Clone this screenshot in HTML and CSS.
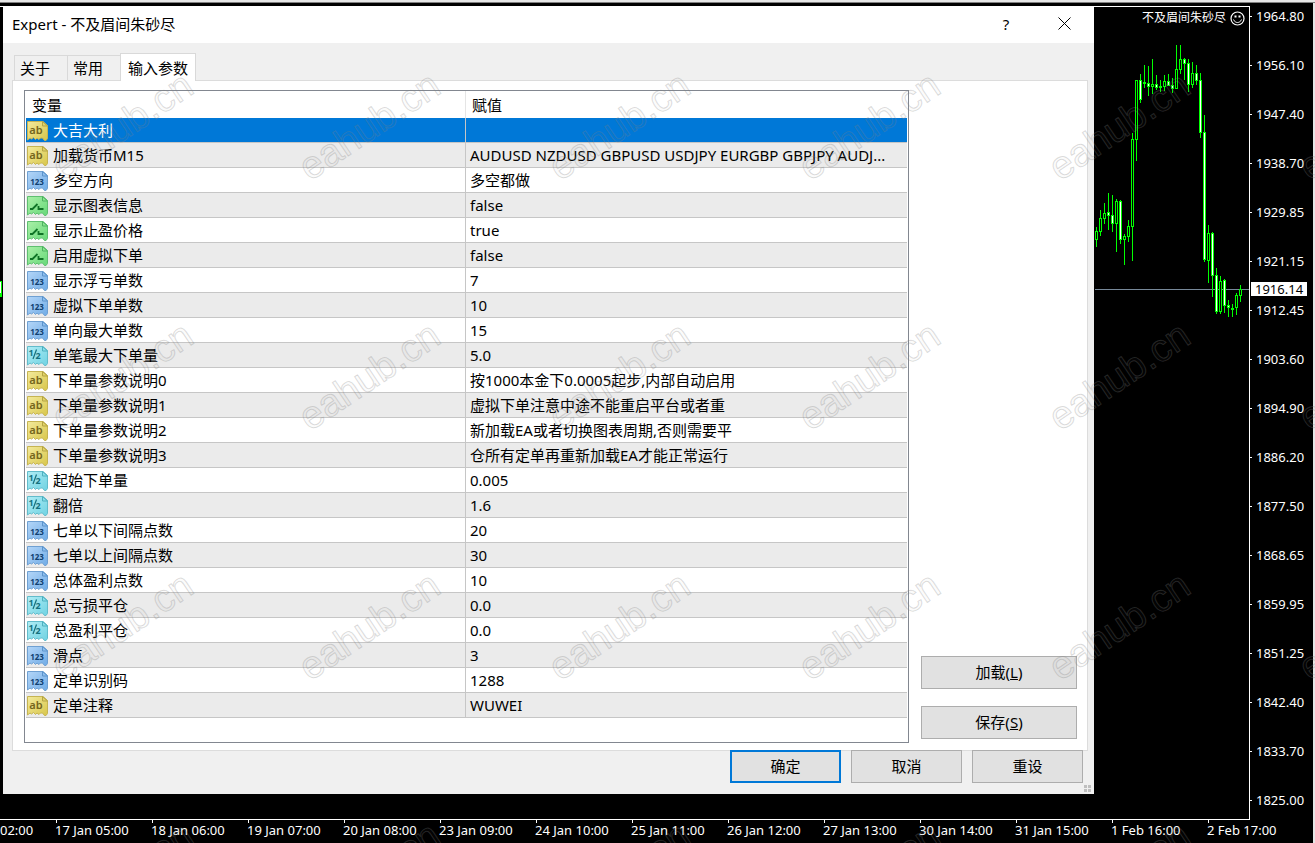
FILE: index.html
```html
<!DOCTYPE html>
<html lang="zh-CN">
  <head>
    <meta charset="utf-8">
    <title>Expert - 不及眉间朱砂尽</title>
    <link rel="stylesheet" href="styles.css">
  </head>

  <body>
    <!-- icons for the parameter types -->
    <svg class="defs" width="0" height="0" aria-hidden="true">
      <defs>
        <linearGradient id="g-yellow" x1="0" y1="0" x2="1" y2="1">
          <stop offset="0" stop-color="#f3ea9c"/><stop offset="1" stop-color="#d8c64a"/>
        </linearGradient>
        <linearGradient id="g-blue" x1="0" y1="0" x2="1" y2="1">
          <stop offset="0" stop-color="#b4d6f8"/><stop offset="1" stop-color="#6fabe6"/>
        </linearGradient>
        <linearGradient id="g-green" x1="0" y1="0" x2="1" y2="1">
          <stop offset="0" stop-color="#aaf0a8"/><stop offset="1" stop-color="#66d878"/>
        </linearGradient>
        <linearGradient id="g-cyan" x1="0" y1="0" x2="1" y2="1">
          <stop offset="0" stop-color="#b0edf5"/><stop offset="1" stop-color="#6fd2e2"/>
        </linearGradient>
        <path id="paper" d="M.5 1.500H16L20.500 5.500V18.500L19 20.500L17.500 20.500L15.500 18L13.500 18L12 19.500L10 18L8.500 19.500L6.500 17.500L4.500 19L3 18L.5 20Z"/>
      </defs>
      <symbol id="i-ab" viewBox="0 0 21 21">
        <use href="#paper" fill="url(#g-yellow)" stroke="#c6b452"/>
        <path d="M15.500 1.500V6H20.500Z" fill="#e2d468" stroke="#b5a445"/>
        <text x="9" y="14" class="glyph ab">ab</text>
      </symbol>
      <symbol id="i-int" viewBox="0 0 21 21">
        <use href="#paper" fill="url(#g-blue)" stroke="#6fa0d2"/>
        <path d="M15.500 1.500V6H20.500Z" fill="#8fc0f0" stroke="#5c94cc"/>
        <text x="10" y="15" class="glyph int">123</text>
      </symbol>
      <symbol id="i-bool" viewBox="0 0 21 21">
        <use href="#paper" fill="url(#g-green)" stroke="#5fbf70"/>
        <path d="M15.500 1.500V6H20.500Z" fill="#8ae890" stroke="#4fb262"/>
        <path d="M3 14H5.500L10.500 9M11.500 11V14H16.500" fill="none" stroke="#0f7326" stroke-width="1.800"/>
      </symbol>
      <symbol id="i-dbl" viewBox="0 0 21 21">
        <use href="#paper" fill="url(#g-cyan)" stroke="#62bccb"/>
        <path d="M15.500 1.500V6H20.500Z" fill="#8be0ec" stroke="#4fb0c0"/>
        <text x="4" y="11" class="glyph dbl">1</text>
        <path d="M6 14L9.500 4.500" stroke="#14707f" stroke-width="1.200"/>
        <text x="11" y="14" class="glyph dbl">2</text>
      </symbol>
    </svg>

    <div class="top-edge"></div>

    <main class="chart">
      <div class="plot">
        <span class="edge-candle"></span>
        <div class="expert-name">不及眉间朱砂尽
          <svg width="15" height="15" viewBox="0 0 15 15" fill="none" stroke="#fff">
            <circle cx="7.500" cy="7.500" r="6.500" stroke-width="1.200"/>
            <path d="M3.500 8.500C5 12.500 10 12.500 11.500 8.500"/>
            <path d="M4.500 5.500H6.500M8.500 5.500H10.500" stroke-width="2"/>
          </svg>
        </div>
        <svg id="candles" width="154" height="320" viewBox="1095 7 154 320" shape-rendering="crispEdges">
          <rect x="1095" y="289" width="154" height="1" fill="#778899"/>
        </svg>
      </div>

      <div class="prices">
        <span>1964.80</span>
        <span>1956.10</span>
        <span>1947.40</span>
        <span>1938.70</span>
        <span>1929.85</span>
        <span>1921.15</span>
        <span>1912.45</span>
        <span>1903.60</span>
        <span>1894.90</span>
        <span>1886.20</span>
        <span>1877.50</span>
        <span>1868.65</span>
        <span>1859.95</span>
        <span>1851.25</span>
        <span>1842.40</span>
        <span>1833.70</span>
        <span>1825.00</span>
        <b class="bid">1916.14</b>
      </div>

      <div class="times">
        <span class="cut">02:00</span>
        <span>17 Jan 05:00</span>
        <span>18 Jan 06:00</span>
        <span>19 Jan 07:00</span>
        <span>20 Jan 08:00</span>
        <span>23 Jan 09:00</span>
        <span>24 Jan 10:00</span>
        <span>25 Jan 11:00</span>
        <span>26 Jan 12:00</span>
        <span>27 Jan 13:00</span>
        <span>30 Jan 14:00</span>
        <span>31 Jan 15:00</span>
        <span>1 Feb 16:00</span>
        <span>2 Feb 17:00</span>
      </div>
    </main>

    <section class="dialog" role="dialog" aria-labelledby="dialog-title">
      <header class="titlebar">
        <h1 id="dialog-title">Expert - 不及眉间朱砂尽</h1>
        <button type="button" class="help">?</button>
        <button type="button" class="close" aria-label="关闭">
          <svg width="13" height="13" viewBox="0 0 13 13" stroke="#000"><path d="M.5 .5L12.500 12.500M12.500 .5L.5 12.500"/></svg>
        </button>
      </header>

      <nav class="tabs">
        <button type="button">关于</button>
        <button type="button">常用</button>
        <button type="button" class="active">输入参数</button>
      </nav>

      <div class="panel">
        <div class="listbox">
          <table>
            <thead>
              <tr><th>变量</th><th>赋值</th></tr>
            </thead>
            <tbody>
              <tr class="selected"><td><svg><use href="#i-ab"/></svg>大吉大利</td><td></td></tr>
              <tr><td><svg><use href="#i-ab"/></svg>加载货币M15</td><td>AUDUSD NZDUSD GBPUSD USDJPY EURGBP GBPJPY AUDJ...</td></tr>
              <tr><td><svg><use href="#i-int"/></svg>多空方向</td><td>多空都做</td></tr>
              <tr><td><svg><use href="#i-bool"/></svg>显示图表信息</td><td>false</td></tr>
              <tr><td><svg><use href="#i-bool"/></svg>显示止盈价格</td><td>true</td></tr>
              <tr><td><svg><use href="#i-bool"/></svg>启用虚拟下单</td><td>false</td></tr>
              <tr><td><svg><use href="#i-int"/></svg>显示浮亏单数</td><td>7</td></tr>
              <tr><td><svg><use href="#i-int"/></svg>虚拟下单单数</td><td>10</td></tr>
              <tr><td><svg><use href="#i-int"/></svg>单向最大单数</td><td>15</td></tr>
              <tr><td><svg><use href="#i-dbl"/></svg>单笔最大下单量</td><td>5.0</td></tr>
              <tr><td><svg><use href="#i-ab"/></svg>下单量参数说明0</td><td>按1000本金下0.0005起步,内部自动启用</td></tr>
              <tr><td><svg><use href="#i-ab"/></svg>下单量参数说明1</td><td>虚拟下单注意中途不能重启平台或者重</td></tr>
              <tr><td><svg><use href="#i-ab"/></svg>下单量参数说明2</td><td>新加载EA或者切换图表周期,否则需要平</td></tr>
              <tr><td><svg><use href="#i-ab"/></svg>下单量参数说明3</td><td>仓所有定单再重新加载EA才能正常运行</td></tr>
              <tr><td><svg><use href="#i-dbl"/></svg>起始下单量</td><td>0.005</td></tr>
              <tr><td><svg><use href="#i-dbl"/></svg>翻倍</td><td>1.6</td></tr>
              <tr><td><svg><use href="#i-int"/></svg>七单以下间隔点数</td><td>20</td></tr>
              <tr><td><svg><use href="#i-int"/></svg>七单以上间隔点数</td><td>30</td></tr>
              <tr><td><svg><use href="#i-int"/></svg>总体盈利点数</td><td>10</td></tr>
              <tr><td><svg><use href="#i-dbl"/></svg>总亏损平仓</td><td>0.0</td></tr>
              <tr><td><svg><use href="#i-dbl"/></svg>总盈利平仓</td><td>0.0</td></tr>
              <tr><td><svg><use href="#i-int"/></svg>滑点</td><td>3</td></tr>
              <tr><td><svg><use href="#i-int"/></svg>定单识别码</td><td>1288</td></tr>
              <tr><td><svg><use href="#i-ab"/></svg>定单注释</td><td>WUWEI</td></tr>
            </tbody>
          </table>
        </div>
        <div class="side">
          <button type="button" class="btn">加载(<u>L</u>)</button>
          <button type="button" class="btn">保存(<u>S</u>)</button>
        </div>
      </div>

      <footer class="actions">
        <button type="button" class="btn default">确定</button>
        <button type="button" class="btn">取消</button>
        <button type="button" class="btn">重设</button>
      </footer>
      <span class="grip"><i></i><i></i><i></i><i></i></span>
    </section>

    <div class="watermarks" id="watermarks" aria-hidden="true"></div>

    <script>
      // x, high, low, body top, body bottom, filled
      const candles = [
        [1096,227,247,231,240,0],[1100,210,236,218,232,0],[1104,203,224,213,219,0],
        [1108,193,230,212,216,1],[1112,195,232,215,224,1],[1116,199,252,201,224,0],
        [1120,200,244,201,240,1],[1124,234,265,236,240,0],[1128,220,242,226,237,0],
        [1132,133,261,139,227,0],[1136,80,161,80,140,0],[1140,74,103,80,100,1],
        [1144,65,88,82,84,0],[1148,66,96,83,87,1],[1152,59,94,84,87,0],
        [1156,75,90,84,88,1],[1160,80,92,86,88,0],[1164,75,91,81,87,0],
        [1168,74,86,81,86,1],[1172,78,93,85,89,1],[1176,45,89,69,89,0],
        [1180,45,74,59,70,0],[1184,58,80,59,64,1],[1188,59,92,63,85,1],
        [1192,62,88,73,85,0],[1196,65,85,73,81,1],[1200,73,138,80,133,1],
        [1204,115,262,132,260,1],[1208,225,283,233,261,0],[1212,232,297,233,276,1],
        [1216,268,314,275,312,1],[1220,276,314,281,312,0],[1224,279,313,280,306,1],
        [1228,300,317,305,308,1],[1232,304,317,308,310,0],[1236,293,315,295,308,0],
        [1240,285,302,289,296,0]
      ];
      const svg = document.getElementById('candles');

      function bar(x, y, w, h, color)
      {
        const r = document.createElementNS('http://www.w3.org/2000/svg', 'rect');
        r.setAttribute('x', x);
        r.setAttribute('y', y);
        r.setAttribute('width', w);
        r.setAttribute('height', Math.max(h, 0));
        r.setAttribute('fill', color);
        svg.appendChild(r);
      }

      candles.forEach(function ([x, high, low, top, bottom, filled])
      {
        bar(x, high, 1, low - high, '#00ff00');
        bar(x - 1, top, 3, bottom - top, '#00ff00');
        bar(x, top + 1, 1, bottom - top - 2, filled ? '#fff' : '#000');
      });

      const marks = document.getElementById('watermarks');
      for (let i = 0; i < 24; i++)
      {
        const mark = document.createElement('span');
        mark.textContent = 'eahub.cn';
        marks.appendChild(mark);
      }
    </script>
  </body>
</html>
```
FILE: styles.css
```css
* 
{
  box-sizing: border-box;
}

body 
{
  position: relative;
  display: flex;
  flex-direction: column;
  min-height: 100vh;
  margin: 0;
  background-color: #000;
  color: #000;
  font-family: "Noto Sans", "Noto Sans CJK SC", sans-serif;
  font-size: 15px;
}

button 
{
  padding: 0;
  font: inherit;
  color: inherit;
}

.defs 
{
  position: absolute;
}

.top-edge 
{
  height: 3px;
  background-color: #e6e6e6;
  border-bottom: 1px solid #808080;
}

/* chart */
.chart 
{
  flex: 1;
  display: grid;
  grid-template-columns: 1fr 63px;
  grid-template-rows: 1fr 23px;
  padding-top: 3px;
  border-right: 2px solid #e6e6e6;
  color: #fff;
  font-size: 13px;
}

.plot 
{
  position: relative;
  display: flex;
  justify-content: flex-end;
  border: solid #fff;
  border-width: 1px 1px 1px 0;
}

.expert-name 
{
  position: absolute;
  top: 2px;
  right: 4px;
  display: flex;
  align-items: center;
  gap: 4px;
  font-size: 12px;
  line-height: 18px;
}

.edge-candle 
{
  position: absolute;
  left: 0;
  top: 274px;
  width: 2px;
  height: 16px;
  background-color: #fff;
  border: solid #00ff00;
  border-width: 1px 1px 4px 0;
}

.prices 
{
  position: relative;
  display: flex;
  flex-direction: column;
  gap: 29px;
  line-height: 20px;
}

.prices span 
{
  display: flex;
  align-items: center;
  gap: 4px;
}

.prices span::before 
{
  content: "";
  width: 2px;
  height: 1px;
  background-color: #fff;
}

.bid 
{
  position: absolute;
  left: 1px;
  top: 276px;
  width: 56px;
  padding-left: 4px;
  background-color: #fff;
  color: #000;
  font-weight: normal;
  line-height: 14px;
}

.times 
{
  grid-column: 1 / -1;
  display: flex;
  overflow: hidden;
  line-height: 20px;
  white-space: nowrap;
}

.times span 
{
  position: relative;
  flex: none;
  width: 96px;
}

.times .cut 
{
  width: 55px;
}

.times span + span::before 
{
  content: "";
  position: absolute;
  left: 1px;
  top: 0;
  width: 1px;
  height: 3px;
  background-color: #fff;
}

/* dialog window */
.dialog 
{
  position: absolute;
  left: 3px;
  right: 221px;
  top: 6px;
  padding-bottom: 11px;
  background-color: #f0f0f0;
}

.titlebar 
{
  display: flex;
  align-items: center;
  height: 37px;
  padding: 0 1px 2px 9px;
  background-color: #fff;
}

.titlebar h1 
{
  flex: 1;
  margin: 0;
  font-size: 15px;
  font-weight: normal;
  line-height: 20px;
}

.titlebar button 
{
  display: grid;
  place-items: center;
  width: 58px;
  height: 35px;
  border: none;
  background: none;
}

.tabs 
{
  display: flex;
  align-items: flex-end;
  margin: 10px 0 0 11px;
}

.tabs button 
{
  width: 54px;
  height: 25px;
  margin-right: -1px;
  padding-left: 5px;
  border: 1px solid #d9d9d9;
  border-bottom: none;
  background-color: #f0f0f0;
  line-height: 24px;
  text-align: left;
}

.tabs .active 
{
  position: relative;
  width: 76px;
  height: 28px;
  margin-bottom: -1px;
  padding-left: 7px;
  background-color: #fff;
  line-height: 24px;
}

.panel 
{
  display: flex;
  gap: 12px;
  margin: 0 6px 0 9px;
  padding: 9px 10px 7px 11px;
  border: 1px solid #dcdcdc;
  background-color: #fff;
}

.listbox 
{
  flex: 1;
  padding: 0 1px 24px;
  border: 1px solid #828790;
}

table 
{
  width: 100%;
  table-layout: fixed;
  border-collapse: separate;
  border-spacing: 0;
  line-height: 20px;
}

th 
{
  height: 27px;
  padding: 0 6px;
  font-weight: normal;
  text-align: left;
}

th:first-child 
{
  width: 440px;
  border-right: 1px solid #e5e5e5;
}

td 
{
  height: 25px;
  padding: 0 4px;
  border-bottom: 1px solid #c6c6c6;
  white-space: nowrap;
  overflow: hidden;
}

td:first-child 
{
  padding-left: 1px;
  border-right: 1px solid #c6c6c6;
}

td svg 
{
  float: left;
  width: 21px;
  height: 21px;
  margin-right: 5px;
}

tbody tr:nth-child(even) 
{
  background-color: #ebebeb;
}

tbody .selected 
{
  background-color: #0078d7;
  color: #fff;
}

.glyph 
{
  font-family: "Noto Sans", sans-serif;
  font-weight: bold;
  text-anchor: middle;
}

.ab 
{
  font-size: 11px;
  font-weight: 600;
  fill: #75651c;
}

.int 
{
  font-size: 8px;
  fill: #103f70;
}

.dbl 
{
  font-size: 9px;
  fill: #14707f;
}

.side 
{
  display: flex;
  flex-direction: column;
  justify-content: flex-end;
  gap: 17px;
  width: 156px;
  padding-bottom: 4px;
}

.btn 
{
  height: 33px;
  padding-bottom: 2px;
  border: 1px solid #adadad;
  background-color: #e1e1e1;
  line-height: 20px;
}

.actions 
{
  position: relative;
  display: flex;
  justify-content: flex-end;
  gap: 10px;
  margin-top: -1px;
  padding-right: 11px;
}

.actions .btn 
{
  width: 111px;
}

.actions .default 
{
  border: 2px solid #0078d7;
}

.grip 
{
  position: absolute;
  right: 3px;
  bottom: 2px;
  display: grid;
  grid-template-columns: 3px 3px;
  gap: 1px;
}

.grip i 
{
  height: 3px;
  background-color: #bfbfbf;
}

/* watermark layer, one mark every 250px */
.watermarks 
{
  position: absolute;
  inset: 0;
  display: grid;
  grid-template-columns: 244px repeat(5, 250px);
  grid-auto-rows: 250px;
  place-items: center;
  padding-top: 1px;
  overflow: hidden;
  pointer-events: none;
}

.watermarks span 
{
  color: rgba(128, 128, 128, 0.05);
  font-family: "Liberation Sans", sans-serif;
  font-size: 39px;
  -webkit-text-stroke: 1px rgba(128, 128, 128, 0.28);
  transform: rotate(-34deg);
}
```
